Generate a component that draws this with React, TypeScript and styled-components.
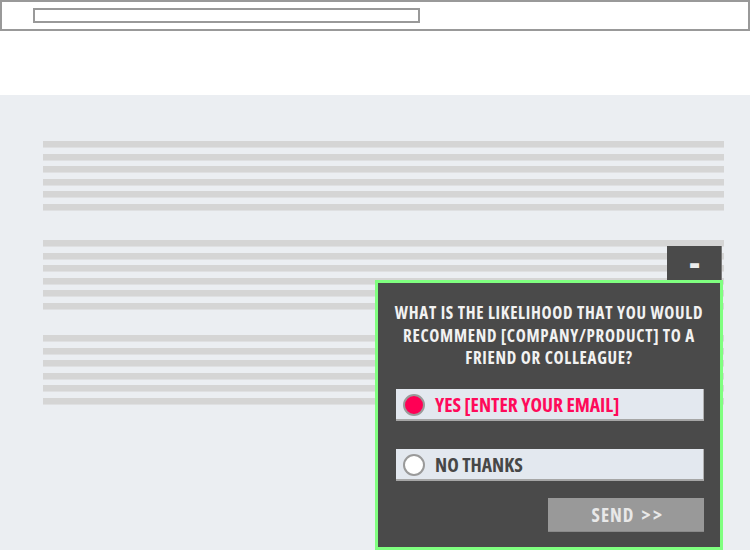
import React from "react";
import styled, { createGlobalStyle } from "styled-components";

const Global = createGlobalStyle`
  html, body { margin: 0; padding: 0; background: #ffffff; }
  body { font-family: "Open Sans", "Liberation Sans", sans-serif; }
  #root { width: 750px; height: 550px; overflow: hidden; position: relative; }
`;

const Page = styled.div`
  width: 750px;
  height: 550px;
  display: flex;
  flex-direction: column;
  position: relative;
  overflow: hidden;
`;

const TopBar = styled.div`
  box-sizing: border-box;
  height: 31px;
  width: 750px;
  border: 2px solid #999999;
  display: flex;
  align-items: flex-start;
  padding: 6px 0 0 31px;
`;

const FakeInput = styled.div`
  box-sizing: border-box;
  width: 387px;
  height: 15px;
  border: 2px solid #999999;
  background: #ffffff;
`;

const Content = styled.div`
  margin-top: 64px;
  flex: 1;
  background: #ebeef2;
  padding: 46px 26px 0 43px;
  display: flex;
  flex-direction: column;
`;

const Paragraph = styled.div<{ $gap: number }>`
  display: flex;
  flex-direction: column;
  gap: 6.6px;
  margin-bottom: ${(p) => p.$gap}px;
`;

const Line = styled.div`
  height: 6px;
  background: #d5d5d5;
  box-shadow: 0 1px 0 #dfe0e2;
`;

const Widget = styled.div`
  position: absolute;
  right: 27px;
  bottom: 0;
  width: 348px;
`;

const MinTab = styled.div`
  position: absolute;
  right: 1px;
  top: -34px;
  width: 55px;
  height: 34px;
  box-sizing: border-box;
  background: #4a4a4a;
  border-right: 1px solid #7a7a7a;
  display: flex;
  align-items: center;
  justify-content: center;
`;

const MinGlyph = styled.span`
  color: #ececec;
  font-family: "Open Sans", sans-serif;
  font-weight: 800;
  font-size: 32px;
  line-height: 1;
  margin-top: -3px;
  margin-left: 1px;
`;

const Popup = styled.div`
  box-sizing: border-box;
  height: 270px;
  border: 3px solid #80ff80;
  background: #4a4a4a;
  padding: 19px 16px 0 18px;
  display: flex;
  flex-direction: column;
`;

const Question = styled.div`
  color: #f2f2f2;
  font-family: "Open Sans", sans-serif;
  font-stretch: 75%;
  font-weight: 700;
  font-size: 17px;
  line-height: 22.7px;
  letter-spacing: 0.7px;
  text-align: center;
  white-space: nowrap;
  margin: 0 -16px 0 -18px;
`;

const Option = styled.div<{ $top: number }>`
  box-sizing: border-box;
  margin-top: ${(p) => p.$top}px;
  height: 32px;
  background: #e3e8ef;
  border-bottom: 2px solid #a6a6a6;
  border-right: 1px solid #b0b0b0;
  display: flex;
  align-items: center;
  padding-left: 7px;
  gap: 10px;
`;

const Radio = styled.span<{ $on: boolean }>`
  box-sizing: border-box;
  width: 22px;
  height: 22px;
  border-radius: 50%;
  border: 2.5px solid #9a9a9a;
  background: ${(p) => (p.$on ? "#ff0055" : "#ffffff")};
  margin-top: 2px;
`;

const OptionLabel = styled.span<{ $on: boolean }>`
  color: ${(p) => (p.$on ? "#ff0a5a" : "#474747")};
  font-family: "Open Sans", sans-serif;
  font-stretch: 75%;
  font-weight: 700;
  font-size: 19.5px;
  line-height: 1;
  margin-top: 2px;
`;

const SendRow = styled.div`
  display: flex;
  justify-content: flex-end;
  margin-top: 17px;
`;

const SendButton = styled.div`
  box-sizing: border-box;
  width: 156px;
  height: 34px;
  background: #999999;
  border-bottom: 1px solid #8a8a8a;
  color: #e8e8e8;
  font-family: "Open Sans", sans-serif;
  font-stretch: 75%;
  font-weight: 700;
  font-size: 19px;
  letter-spacing: 1px;
  display: flex;
  align-items: center;
  justify-content: center;
  padding-left: 4px;
  white-space: pre;
`;

const Arrows = styled.span`
  letter-spacing: 2.5px;
  margin-left: 7px;
`;

const para = [6, 6, 6];

export default function App() {
  return (
    <>
      <Global />
      <Page>
        <TopBar>
          <FakeInput />
        </TopBar>
        <Content>
          <Paragraph $gap={30}>
            {Array.from({ length: para[0] }).map((_, i) => (
              <Line key={i} />
            ))}
          </Paragraph>
          <Paragraph $gap={26}>
            {Array.from({ length: para[1] }).map((_, i) => (
              <Line key={i} />
            ))}
          </Paragraph>
          <Paragraph $gap={0}>
            {Array.from({ length: para[2] }).map((_, i) => (
              <Line key={i} />
            ))}
          </Paragraph>
        </Content>
        <Widget>
          <MinTab>
            <MinGlyph>-</MinGlyph>
          </MinTab>
          <Popup>
            <Question>
              WHAT IS THE LIKELIHOOD THAT YOU WOULD
              <br />
              RECOMMEND [COMPANY/PRODUCT] TO A
              <br />
              FRIEND OR COLLEAGUE?
            </Question>
            <Option $top={19}>
              <Radio $on={true} />
              <OptionLabel $on={true}>YES [ENTER YOUR EMAIL]</OptionLabel>
            </Option>
            <Option $top={28}>
              <Radio $on={false} />
              <OptionLabel $on={false}>NO THANKS</OptionLabel>
            </Option>
            <SendRow>
              <SendButton>
                SEND<Arrows>&gt;&gt;</Arrows>
              </SendButton>
            </SendRow>
          </Popup>
        </Widget>
      </Page>
    </>
  );
}
